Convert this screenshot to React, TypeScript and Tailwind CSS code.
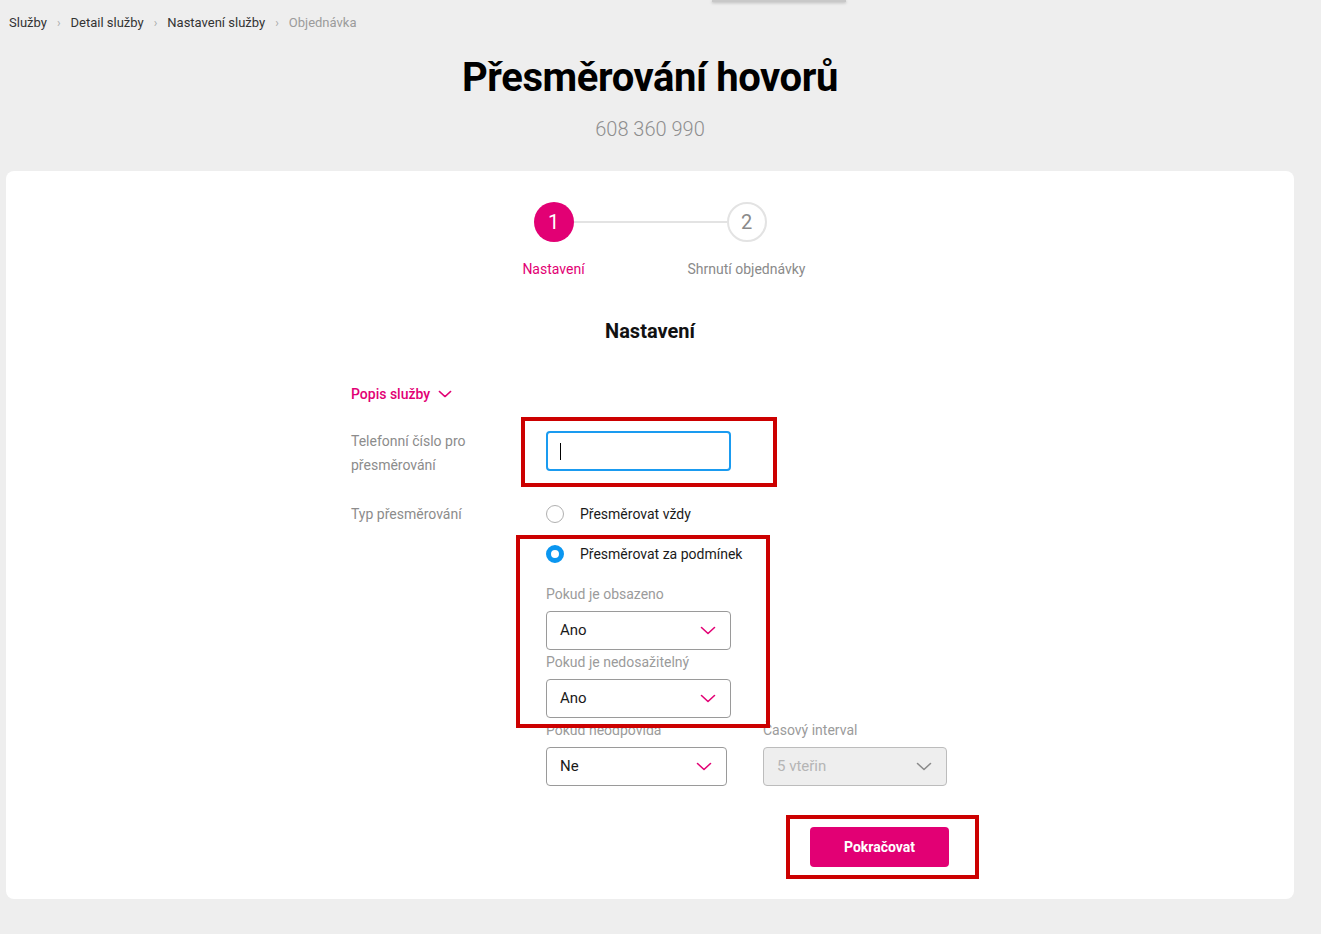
import React from 'react';

const Chevron = ({ className }: { className?: string }) => (
  <svg viewBox="0 0 16 9" className={className} fill="none" stroke="currentColor" strokeWidth="1.6" strokeLinecap="round" strokeLinejoin="round">
    <path d="M1.5 1.5l6.5 6 6.5-6" />
  </svg>
);

function Select({ value, width, disabled }: { value: string; width: string; disabled?: boolean }) {
  return (
    <div
      className={`${width} h-[39px] rounded-[4px] border flex items-center justify-between pl-[13px] pr-[14px] text-[15px] ${
        disabled ? 'bg-[#eeeeee] border-[#bcbcbc] text-[#b5b5b5]' : 'bg-white border-[#9a9a9a] text-[#1a1a1a]'
      }`}
    >
      <span>{value}</span>
      <Chevron className={`w-[16px] h-[9px] ${disabled ? 'text-[#8a8a8a]' : 'text-[#e20074]'}`} />
    </div>
  );
}

export default function App() {
  return (
    <div className="min-h-[934px] bg-[#eeeeee] font-['Roboto',sans-serif] relative pb-[35px]">
      <div className="absolute left-[712px] top-0 w-[134px] h-[2px] bg-[#c8c8c8] shadow-[0_1px_3px_rgba(0,0,0,0.25)]" />

      <div className="w-[1300px]">
        <nav className="pl-[9px] pt-[13px] flex items-center text-[13px] leading-[20px] text-[#333]">
          <span>Služby</span>
          <span className="mx-[10px] text-[#aaa] text-[12px]">›</span>
          <span>Detail služby</span>
          <span className="mx-[10px] text-[#aaa] text-[12px]">›</span>
          <span>Nastavení služby</span>
          <span className="mx-[10px] text-[#aaa] text-[12px]">›</span>
          <span className="text-[#9b9b9b]">Objednávka</span>
        </nav>

        <h1 className="mt-[21px] text-center text-[40px] leading-[48px] font-bold text-black tracking-[-0.4px]">
          Přesměrování hovorů
        </h1>
        <p className="mt-[13px] text-center text-[20px] leading-[28px] font-light text-[#8e8e8e]">608 360 990</p>

        <div className="relative mt-[28px] ml-[6px] w-[1288px] bg-white rounded-[8px] pt-[31px] pb-[32px]">
          {/* stepper */}
          <div className="flex justify-center">
            <div className="w-[233px] flex items-center">
              <div className="w-[40px] h-[40px] rounded-full bg-[#e20074] text-white text-[20px] flex items-center justify-center">1</div>
              <div className="flex-1 h-[2px] bg-[#e3e3e3]" />
              <div className="w-[40px] h-[40px] rounded-full border-2 border-[#e3e3e3] bg-white text-[#8a8a8a] text-[20px] flex items-center justify-center">2</div>
            </div>
          </div>
          <div className="flex justify-center mt-[17px] text-[14px] leading-[20px]">
            <div className="w-[193px] text-center text-[#e20074]">Nastavení</div>
            <div className="w-[193px] text-center text-[#8a8a8a]">Shrnutí objednávky</div>
          </div>

          <h2 className="mt-[38px] text-center text-[20px] leading-[28px] font-bold text-[#111]">Nastavení</h2>

          <div className="w-[598px] mx-auto mt-[39px]">
            <button className="flex items-center gap-[8px] text-[14px] leading-[20px] font-medium text-[#e20074]">
              Popis služby
              <Chevron className="w-[14px] h-[8px]" />
            </button>

            <div className="flex mt-[25px]">
              <div className="w-[195px] text-[14px] leading-[24px] text-[#8c8c8c]">
                Telefonní číslo pro
                <br />
                přesměrování
              </div>
              <div className="mt-[2px] w-[185px] h-[40px] rounded-[4px] border-2 border-[#1a9bf0] bg-white flex items-center pl-[12px]">
                <div className="w-[1px] h-[17px] bg-black" />
              </div>
            </div>

            <div className="flex mt-[25px]">
              <div className="w-[195px] text-[14px] leading-[24px] text-[#8c8c8c]">Typ přesměrování</div>
              <div className="flex flex-col">
                <label className="flex items-center gap-[16px] h-[24px] text-[14px] text-[#1a1a1a]">
                  <span className="w-[18px] h-[18px] rounded-full border border-[#b0b0b0] bg-white" />
                  Přesměrovat vždy
                </label>
                <label className="mt-[16px] flex items-center gap-[16px] h-[24px] text-[14px] text-[#1a1a1a]">
                  <span className="w-[18px] h-[18px] rounded-full border-[5px] border-[#0a96f0] bg-white" />
                  Přesměrovat za podmínek
                </label>

                <div className="mt-[18px] text-[14px] leading-[20px] text-[#9b9b9b]">Pokud je obsazeno</div>
                <div className="mt-[7px]">
                  <Select value="Ano" width="w-[185px]" />
                </div>
                <div className="mt-[2px] text-[14px] leading-[20px] text-[#9b9b9b]">Pokud je nedosažitelný</div>
                <div className="mt-[7px]">
                  <Select value="Ano" width="w-[185px]" />
                </div>
                <div className="mt-[2px] flex gap-[36px]">
                  <div>
                    <div className="text-[14px] leading-[20px] text-[#9b9b9b]">Pokud neodpovídá</div>
                    <div className="mt-[7px]">
                      <Select value="Ne" width="w-[181px]" />
                    </div>
                  </div>
                  <div>
                    <div className="text-[14px] leading-[20px] text-[#9b9b9b]">Časový interval</div>
                    <div className="mt-[7px]">
                      <Select value="5 vteřin" width="w-[184px]" disabled />
                    </div>
                  </div>
                </div>
              </div>
            </div>

            <div className="flex justify-end mt-[41px]">
              <button className="w-[139px] h-[40px] rounded-[4px] bg-[#e20074] text-white text-[14px] font-bold">Pokračovat</button>
            </div>
          </div>

          {/* annotation boxes */}
          <div className="absolute left-[515px] top-[246px] w-[256px] h-[70px] border-[4px] border-[#cc0000]" />
          <div className="absolute left-[510px] top-[364px] w-[254px] h-[193px] border-[4px] border-[#cc0000]" />
          <div className="absolute left-[780px] top-[644px] w-[193px] h-[64px] border-[4px] border-[#cc0000]" />
        </div>
      </div>
    </div>
  );
}
